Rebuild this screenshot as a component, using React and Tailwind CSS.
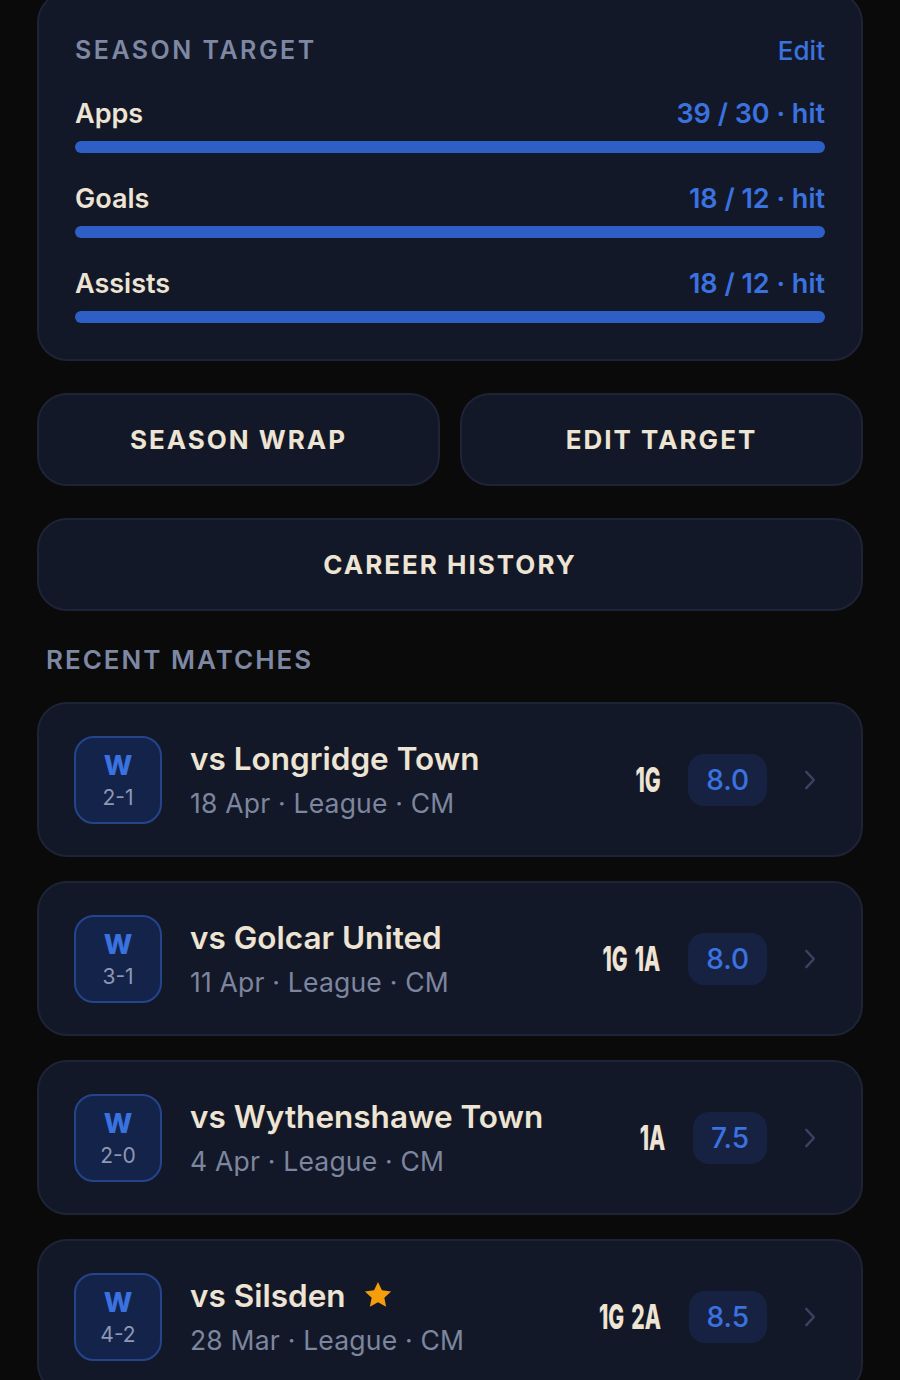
import React from 'react';

const FONT = { fontFamily: "Inter, 'Noto Sans', 'Liberation Sans', sans-serif" };

const targets = [
  { label: 'Apps', value: '39 / 30 · hit' },
  { label: 'Goals', value: '18 / 12 · hit' },
  { label: 'Assists', value: '18 / 12 · hit' },
];

const matches = [
  { opp: 'Longridge Town', score: '2-1', date: '18 Apr', stats: '1G', rating: '8.0' },
  { opp: 'Golcar United', score: '3-1', date: '11 Apr', stats: '1G 1A', rating: '8.0' },
  { opp: 'Wythenshawe Town', score: '2-0', date: '4 Apr', stats: '1A', rating: '7.5' },
  { opp: 'Silsden', score: '4-2', date: '28 Mar', stats: '1G 2A', rating: '8.5', star: true },
];

function Star() {
  return (
    <svg viewBox="0 0 24 24" className="w-[32px] h-[32px]" fill="#f59e0b">
      <path d="M12 2.2l2.95 6.3 6.85.8-5.05 4.7 1.35 6.8L12 17.4l-6.1 3.4 1.35-6.8L2.2 9.3l6.85-.8z" />
    </svg>
  );
}

function Chevron() {
  return (
    <svg viewBox="0 0 24 24" className="w-[26px] h-[26px]" fill="none" stroke="#3b4262" strokeWidth="2.2" strokeLinecap="round" strokeLinejoin="round">
      <path d="M9.5 4.5l7 7.5-7 7.5" />
    </svg>
  );
}

function MatchRow({ m }) {
  return (
    <div className="h-[155px] rounded-[30px] bg-[#131828] border-2 border-[#1e2335] pl-[35px] pr-[39px] flex items-center">
      <div className="w-[88px] h-[88px] rounded-[20px] bg-[#14234a] border-2 border-[#24448c] flex flex-col items-center justify-center">
        <span className="text-[27px] font-extrabold text-[#3a72e0] leading-none">W</span>
        <span className="text-[21px] text-[#8d98b3] leading-none mt-[8px]">{m.score}</span>
      </div>
      <div className="ml-[28px] flex-1 flex flex-col">
        <div className="flex items-center gap-[16px]">
          <span className="text-[31.5px] font-semibold text-[#ede4d3] leading-none">vs {m.opp}</span>
          {m.star && <Star />}
        </div>
        <span className="text-[26.5px] tracking-[0.2px] text-[#7d869f] leading-none mt-[16px]">
          {m.date} · League · CM
        </span>
      </div>
      {/* condensed stat text, squeezed toward its right edge */}
      <span className="inline-block origin-right scale-x-[0.62] text-[34px] font-extrabold text-[#ede4d3] leading-none whitespace-nowrap [word-spacing:4px]">
        {m.stats}
      </span>
      <div className="ml-[28px] h-[52px] px-[18px] rounded-[16px] bg-[#172242] flex items-center">
        <span className="text-[28px] text-[#3a72e0] font-medium">{m.rating}</span>
      </div>
      <div className="ml-[29px]">
        <Chevron />
      </div>
    </div>
  );
}

export default function App() {
  return (
    <div className="min-h-[1380px] bg-[#0a0a0b] px-[37px] overflow-hidden" style={FONT}>
      {/* Season target card */}
      <div className="-mt-[8px] rounded-[30px] bg-[#131828] border-2 border-[#1e2335] px-[36px] pt-[37px] pb-[36px]">
        <div className="flex items-center justify-between">
          <span className="text-[25px] font-semibold tracking-[2.5px] text-[#7e88a3]">SEASON TARGET</span>
          <span className="text-[26px] font-medium text-[#3a72e0]">Edit</span>
        </div>
        <div className="mt-[30px] flex flex-col gap-[32px]">
          {targets.map((t) => (
            <div key={t.label}>
              <div className="flex items-center justify-between">
                <span className="text-[27px] font-semibold text-[#ede4d3] leading-none">{t.label}</span>
                <span className="text-[27px] font-semibold text-[#3a72e0] leading-none">{t.value}</span>
              </div>
              <div className="mt-[14px] h-[12px] rounded-full bg-[#2d5fc7]" />
            </div>
          ))}
        </div>
      </div>

      {/* Actions */}
      <div className="mt-[32px] grid grid-cols-2 gap-[20px]">
        <button className="h-[93px] rounded-[30px] bg-[#131828] border-2 border-[#1e2335] text-[26px] font-bold tracking-[2px] text-[#ede4d3]">
          SEASON WRAP
        </button>
        <button className="h-[93px] rounded-[30px] bg-[#131828] border-2 border-[#1e2335] text-[26px] font-bold tracking-[2px] text-[#ede4d3]">
          EDIT TARGET
        </button>
      </div>
      <button className="mt-[32px] w-full h-[93px] rounded-[30px] bg-[#131828] border-2 border-[#1e2335] text-[26px] font-bold tracking-[2px] text-[#ede4d3]">
        CAREER HISTORY
      </button>

      {/* Recent matches */}
      <div className="mt-[29px] pl-[9px] text-[26px] font-semibold tracking-[2px] text-[#7e88a3]">RECENT MATCHES</div>
      <div className="mt-[23px] flex flex-col gap-[24px]">
        {matches.map((m) => (
          <MatchRow key={m.opp} m={m} />
        ))}
      </div>
    </div>
  );
}
